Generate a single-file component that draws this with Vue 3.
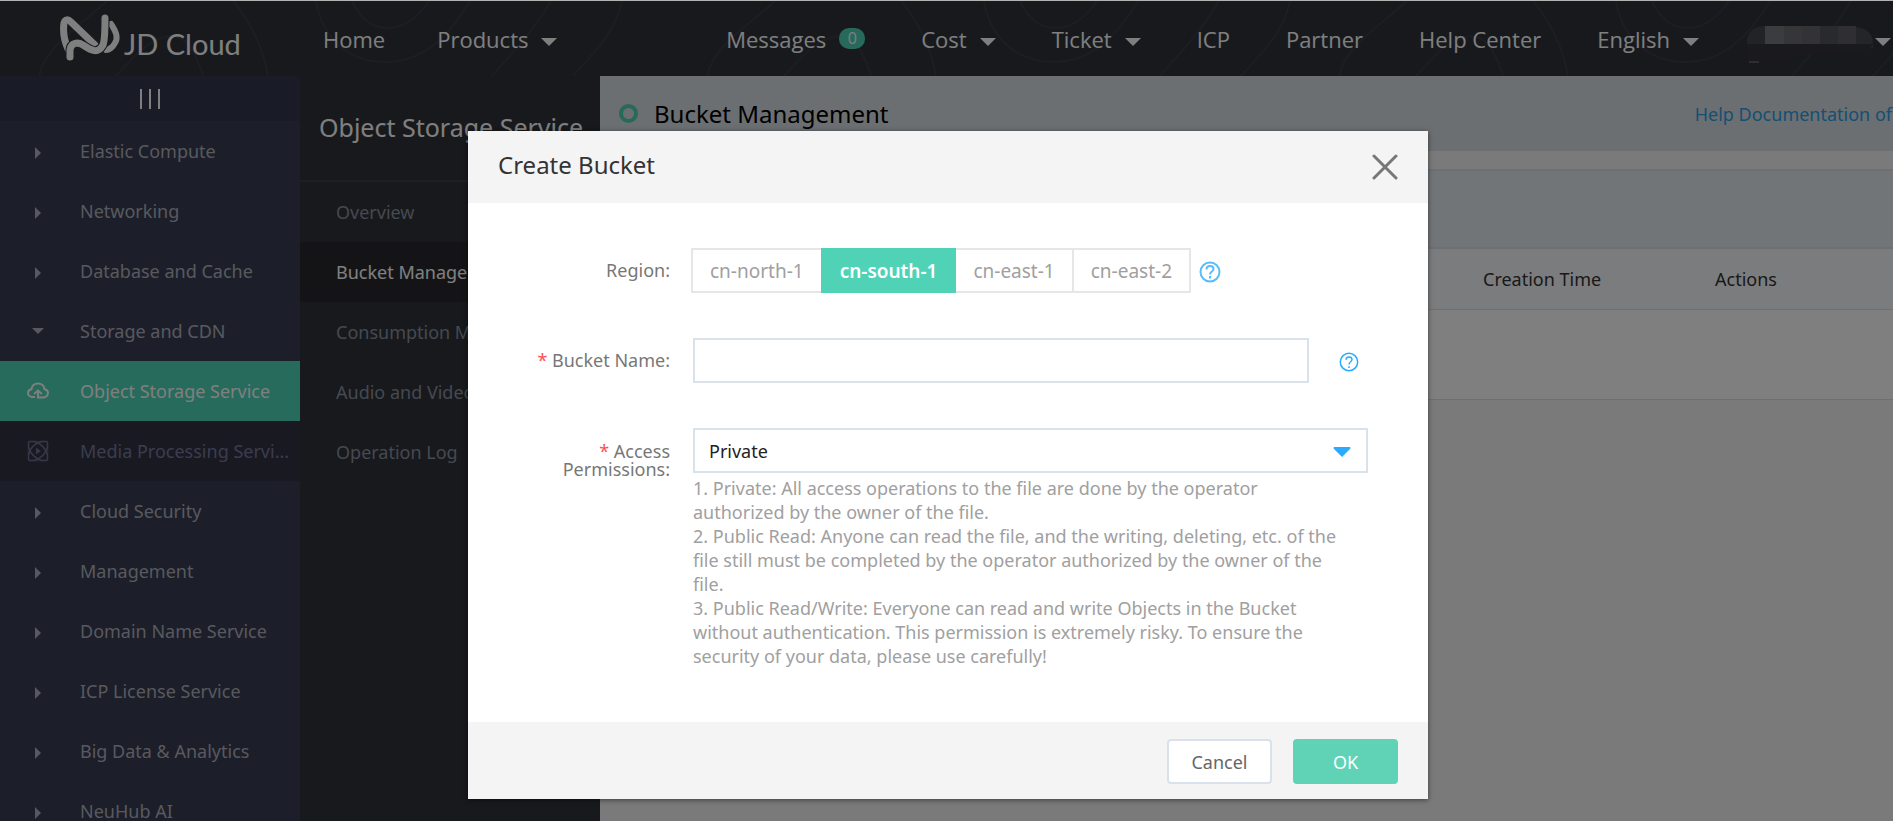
<script setup>
import { ref } from 'vue'

const navItems = [
  { label: 'Messages', badge: '0' },
  { label: 'Cost', caret: true },
  { label: 'Ticket', caret: true },
  { label: 'ICP' },
  { label: 'Partner' },
  { label: 'Help Center' },
  { label: 'English', caret: true }
]

const services = [
  { label: 'Elastic Compute', kind: 'closed' },
  { label: 'Networking', kind: 'closed' },
  { label: 'Database and Cache', kind: 'closed' },
  { label: 'Storage and CDN', kind: 'open' },
  { label: 'Object Storage Service', kind: 'cloud' },
  { label: 'Media Processing Servi...', kind: 'media' },
  { label: 'Cloud Security', kind: 'closed' },
  { label: 'Management', kind: 'closed' },
  { label: 'Domain Name Service', kind: 'closed' },
  { label: 'ICP License Service', kind: 'closed' },
  { label: 'Big Data & Analytics', kind: 'closed' },
  { label: 'NeuHub AI', kind: 'closed' }
]

const submenu = ['Overview', 'Bucket Management', 'Consumption Monitor', 'Audio and Video', 'Operation Log']
const regions = ['cn-north-1', 'cn-south-1', 'cn-east-1', 'cn-east-2']
const region = ref('cn-south-1')
const bucketName = ref('')
const permission = ref('Private')
</script>

<template>
  <div class="page">
    <header class="topbar">
      <svg class="contours" viewBox="0 0 1893 76" preserveAspectRatio="xMinYMin slice" aria-hidden="true">
        <defs>
          <g id="contour-set" fill="none" stroke="#393c45" stroke-width="2">
            <path d="M107 0C80 25 44 46 39 76" />
            <path d="M115 76C135 55 150 36 172 35C190 36 196 56 204 76" />
            <path d="M233 0C250 20 264 48 268 76" />
            <path d="M316 0C322 36 348 61 385 61C424 61 450 34 470 0" />
            <path d="M352 0C360 18 372 27 388 27C404 27 418 16 429 0" />
            <path d="M491 76C516 48 536 26 551 0" />
            <path d="M572 76C596 50 616 30 622 0" />
          </g>
        </defs>
        <use href="#contour-set" />
        <use href="#contour-set" x="668" />
        <use href="#contour-set" x="1300" />
      </svg>
      <a class="logo" href="#" aria-label="JD Cloud">
        <svg viewBox="0 0 188 52" width="188" height="52" fill="none" stroke="#fff" stroke-linecap="round" stroke-linejoin="round">
          <path d="M9 36C5 27 4 17 5 10C6 6 9 6 12 9L36 32" stroke-width="7" />
          <path d="M52 11C58 20 59 25 56 30C54 34 50 37 47 37" stroke-width="6" />
          <path d="M11 44V37C12 29 19 29 24 32C33 38 39 41 44 32C46 27 46 18 46 5" stroke="#2f323b" stroke-width="9" />
          <path d="M11 44V37C12 29 19 29 24 32C33 38 39 41 44 32C46 27 46 18 46 5" stroke-width="7" />
          <text x="65" y="42" fill="#fff" stroke="none" font-family="Lato, sans-serif" font-size="29">JD Cloud</text>
        </svg>
      </a>
      <nav class="nav-left">
        <a href="#">Home</a>
        <a href="#">Products<i class="caret"></i></a>
      </nav>
      <nav class="nav-right">
        <a v-for="n in navItems" :key="n.label" href="#">
          {{ n.label }}<span v-if="n.badge" class="badge">{{ n.badge }}</span><i v-if="n.caret" class="caret"></i>
        </a>
        <button class="account" type="button" aria-label="Account">
          <svg width="128" height="42" viewBox="0 0 128 42" aria-hidden="true">
            <path d="M0 22V13Q3 0 18 0V22Z" fill="#42464e" />
            <path d="M18 0H37V22H18Z" fill="#77787c" />
            <path d="M37 0H55V22H37Z" fill="#6c6d72" />
            <path d="M55 0H73V22H55Z" fill="#66666c" />
            <path d="M73 0H91V22H73Z" fill="#53545b" />
            <path d="M91 0H109V22H91Z" fill="#5f5f67" />
            <path d="M109 1Q126 3 126 18V22H109Z" fill="#484a51" />
            <path d="M0 18H126Q122 29 99 26Q84 30 63 28Q38 35 14 36H0Z" fill="#34353c" />
            <path d="M2 36H12" stroke="#83858a" stroke-width="1" />
          </svg>
          <i class="caret"></i>
        </button>
      </nav>
    </header>

    <div class="body">
      <aside class="services">
        <svg class="waves" viewBox="0 0 300 745" preserveAspectRatio="none" aria-hidden="true">
          <path d="M60 160L200 60L300 130V330L180 280Z" fill="#3a4656" opacity=".25" />
          <path d="M0 400Q150 350 300 420L0 510Z" fill="#3a4656" opacity=".3" />
          <path d="M110 745L160 690Q230 660 300 640V745Z" fill="#3a4656" opacity=".3" />
        </svg>
        <button class="collapse" type="button" aria-label="Collapse menu"><i></i><i></i><i></i></button>
        <a v-for="s in services" :key="s.label" href="#" class="service" :class="s.kind">
          <span class="mark">
            <svg v-if="s.kind === 'cloud'" width="22" height="18" viewBox="0 0 22 18" fill="none" stroke="#fff" stroke-width="2">
              <path d="M8 15H5.500C3 15 1 13.200 1 11C1 9 2.500 7.500 4.500 7.200C4.800 3.800 7.500 1.500 11 1.500C14.500 1.500 17.200 3.800 17.500 7.200C19.500 7.500 21 9 21 11C21 13.200 19 15.500 16.500 15.500H11V9" />
              <path d="M7 12L11 8.500L15 12" />
            </svg>
            <svg v-else-if="s.kind === 'media'" width="22" height="22" viewBox="0 0 22 22" fill="none" stroke="#6c7090" stroke-width="1.500">
              <path d="M1.500 7V3Q1.500 1.500 3 1.500H7Q17 4 20.500 15V19Q20.500 20.500 19 20.500H15Q4 17 1.500 7Z" />
              <path d="M20.500 7V3Q20.500 1.500 19 1.500H15Q4 4 1.500 15V19Q1.500 20.500 3 20.500H7Q18 17 20.500 7Z" />
              <path d="M7 1.500H15M7 20.500H15M1.500 7V15M20.500 7V15" opacity=".5" />
              <path d="M9 7.500L14 11L9 14.500Z" fill="#6c7090" stroke="none" />
            </svg>
            <i v-else :class="s.kind === 'open' ? 'tri-down' : 'tri-right'"></i>
          </span>
          <span class="service-label">{{ s.label }}</span>
        </a>
      </aside>

      <aside class="submenu">
        <h2>Object Storage Service</h2>
        <a v-for="(m, i) in submenu" :key="m" href="#" :class="{ active: i === 1 }">{{ m }}</a>
      </aside>

      <main class="content">
        <div class="heading">
          <h1><i class="ring"></i>Bucket Management</h1>
          <a href="#">Help Documentation of</a>
        </div>
        <div class="tools"></div>
        <table>
          <colgroup>
            <col class="col-lead" />
            <col class="col-time" />
            <col />
          </colgroup>
          <thead>
            <tr><td></td><th scope="col">Creation Time</th><th scope="col">Actions</th></tr>
          </thead>
          <tbody>
            <tr><td colspan="3"></td></tr>
          </tbody>
        </table>
      </main>
    </div>

    <div class="overlay">
      <form class="dialog" role="dialog" aria-labelledby="dialog-title" @submit.prevent>
        <header class="dialog-head">
          <h2 id="dialog-title">Create Bucket</h2>
          <button type="button" class="close" aria-label="Close">
            <svg width="26" height="26" viewBox="0 0 26 26" stroke="#777" stroke-width="3" stroke-linecap="round">
              <path d="M2 2L24 24M24 2L2 24" />
            </svg>
          </button>
        </header>

        <div class="dialog-body">
          <div class="row">
            <span class="label" id="region-label">Region:</span>
            <div class="field">
              <div class="segments" role="group" aria-labelledby="region-label">
                <button v-for="r in regions" :key="r" type="button" :class="{ on: r === region }" @click="region = r">{{ r }}</button>
              </div>
              <button type="button" class="help" aria-label="Region help">
                <svg width="22" height="22" viewBox="0 0 22 22" fill="none" stroke="#5bbcfb" stroke-width="2">
                  <circle cx="11" cy="11" r="9.500" />
                  <path d="M7.500 8.500C7.500 6.300 9 5 11 5S14.500 6.300 14.500 8.200C14.500 10.500 11 10.700 11 13.500M11 15V17.500" />
                </svg>
              </button>
            </div>
          </div>

          <div class="row">
            <label class="label" for="bucket-name"><b>*</b> Bucket Name:</label>
            <div class="field wide">
              <input id="bucket-name" v-model="bucketName" type="text" />
              <button type="button" class="help" aria-label="Bucket name help">
                <svg width="20" height="20" viewBox="0 0 20 20" fill="none" stroke="#2aabfd" stroke-width="1.500">
                  <circle cx="10" cy="10" r="8.700" />
                  <path d="M7 7.800C7 6 8.300 5 10 5S13 6 13 7.600C13 9.700 10 9.800 10 12.500M10 14.200V16" />
                </svg>
              </button>
            </div>
          </div>

          <div class="row">
            <label class="label two-line" for="permission"><b>*</b> Access Permissions:</label>
            <div class="field wide stacked">
              <div class="select">
                <select id="permission" v-model="permission">
                  <option>Private</option>
                  <option>Public Read</option>
                  <option>Public Read/Write</option>
                </select>
                <svg class="select-arrow" width="18" height="10" viewBox="0 0 18 10" aria-hidden="true"><path d="M1 0H17Q18 1 17 2L9 10L1 2Q0 1 1 0Z" fill="#2aabfd" /></svg>
              </div>
              <p>
                1. Private: All access operations to the file are done by the operator<br />
                authorized by the owner of the file.<br />
                2. Public Read: Anyone can read the file, and the writing, deleting, etc. of the<br />
                file still must be completed by the operator authorized by the owner of the<br />
                file.<br />
                3. Public Read/Write: Everyone can read and write Objects in the Bucket<br />
                without authentication. This permission is extremely risky. To ensure the<br />
                security of your data, please use carefully!
              </p>
            </div>
          </div>
        </div>

        <footer class="dialog-foot">
          <button type="button" class="cancel">Cancel</button>
          <button type="submit" class="ok">OK</button>
        </footer>
      </form>
    </div>
  </div>
</template>

<style>
body {
  margin: 0;
  overflow: hidden;
}
</style>

<style scoped>
.page,
.page * {
  box-sizing: border-box;
}
.page {
  height: 100vh;
  overflow: hidden;
  display: flex;
  flex-direction: column;
  border-top: 1px solid #b3b3b3;
  font-family: "Noto Sans", "Open Sans", sans-serif;
  font-size: 18px;
  color: #333;
  position: relative;
}
a {
  color: inherit;
  text-decoration: none;
}
button,
input,
select {
  font: inherit;
  margin: 0;
  padding: 0;
}
h1,
h2,
p {
  margin: 0;
  font-weight: 400;
}
.topbar {
  flex: none;
  height: 75px;
  background: #2f323b;
  color: #fff;
  display: flex;
  align-items: center;
  font-family: "Open Sans", "Noto Sans", sans-serif;
  font-size: 22px;
  position: relative;
}
.contours {
  position: absolute;
  inset: 0;
  width: 100%;
  height: 100%;
}
.logo {
  margin-left: 59px;
  width: 264px;
  display: flex;
  position: relative;
}
.nav-left,
.nav-right {
  display: flex;
  align-items: center;
  white-space: nowrap;
  position: relative;
}
.nav-left {
  gap: 52px;
}
.nav-right {
  margin-left: auto;
  gap: 56px;
  padding-right: 2px;
}
.nav-left a,
.nav-right a {
  display: flex;
  align-items: center;
}
.caret {
  width: 0;
  height: 0;
  margin: 6px 0 0 13px;
  border: 8px solid transparent;
  border-top-color: #fff;
  border-bottom: 0;
}
.badge {
  margin-left: 13px;
  width: 26px;
  height: 21px;
  border-radius: 10px;
  background: #4fd2b6;
  font-size: 16px;
  line-height: 21px;
  text-align: center;
}
.account {
  margin-left: -8px;
  display: flex;
  align-items: center;
  background: none;
  border: 0;
}
.account svg {
  margin-top: 16px;
}
.account .caret {
  margin-left: 0;
}
.body {
  flex: 1;
  min-height: 0;
  display: flex;
}
.services {
  flex: none;
  width: 300px;
  background: #393c52;
  color: #b0b2bd;
  position: relative;
  overflow: hidden;
}
.waves {
  position: absolute;
  inset: 0;
  width: 100%;
  height: 100%;
}
.collapse {
  width: 100%;
  height: 45px;
  border: 0;
  background: #33364e;
  display: flex;
  justify-content: center;
  align-items: center;
  gap: 7px;
  position: relative;
}
.collapse i {
  width: 2px;
  height: 20px;
  background: #fff;
}
.service {
  height: 60px;
  display: flex;
  align-items: center;
  position: relative;
}
.mark {
  flex: none;
  width: 76px;
  display: flex;
  justify-content: center;
}
.service-label {
  margin-left: 4px;
  white-space: nowrap;
}
.tri-right {
  margin-top: 4px;
  border: 6px solid transparent;
  border-left-color: #b0b2bd;
  border-right: 0;
}
.tri-down {
  border: 6px solid transparent;
  border-top-color: #b0b2bd;
  border-bottom: 0;
}
.cloud {
  background: #4ed6b8;
  color: #fff;
}
.media {
  background: #333344;
  color: #757a9c;
}
.submenu {
  flex: none;
  width: 300px;
  background: #303238;
  color: #8a92a2;
}
.submenu h2 {
  height: 106px;
  padding-left: 19px;
  border-bottom: 2px solid #3d3f47;
  font-size: 25px;
  line-height: 102px;
  color: #fff;
  white-space: nowrap;
}
.submenu a {
  display: block;
  padding-left: 36px;
  line-height: 60px;
  white-space: nowrap;
}
.submenu .active {
  background: #28292f;
  color: #fff;
}
.content {
  flex: 1;
  min-width: 0;
  background: #f4f4f4;
}
.heading {
  height: 75px;
  padding: 0 1px 0 19px;
  background: #d7dee3;
  display: flex;
  align-items: center;
  justify-content: space-between;
}
.heading h1 {
  display: flex;
  align-items: center;
  font-size: 24px;
  color: #000;
}
.ring {
  width: 19px;
  height: 19px;
  margin-right: 16px;
  border: 4px solid #4fd2b6;
  border-radius: 50%;
}
.heading a {
  color: #2b9fe6;
}
.tools {
  margin-top: 18px;
  height: 80px;
  background: #e4ebf0;
  border: 2px solid #dcdfe8;
  border-width: 2px 0;
}
table {
  width: 100%;
  border-collapse: collapse;
  table-layout: fixed;
}
.col-lead {
  width: 883px;
}
.col-time {
  width: 232px;
}
th {
  padding: 0;
  font-weight: 400;
  text-align: left;
}
thead tr {
  height: 60px;
  background: #f7f8fc;
  border-bottom: 1px solid #dcdfe8;
}
tbody tr {
  height: 90px;
  background: #fff;
  border-bottom: 1px solid #dcdfe8;
}
.overlay {
  position: absolute;
  inset: 0;
  padding: 130px 0 0 3px;
  background: rgba(0, 0, 0, 0.5);
  display: flex;
  justify-content: center;
  align-items: flex-start;
}
.dialog {
  width: 960px;
  background: #fff;
  box-shadow: 0 1px 5px rgba(0, 0, 0, 0.5);
}
.dialog-head {
  height: 72px;
  padding: 0 30px;
  background: #f4f4f4;
  display: flex;
  align-items: center;
  justify-content: space-between;
}
.dialog-head h2 {
  font-size: 24px;
  line-height: 68px;
  height: 72px;
}
.close,
.help {
  display: flex;
  border: 0;
  background: none;
}
.dialog-body {
  padding: 45px 60px 54px 0;
}
.row {
  display: grid;
  grid-template-columns: 202px 1fr;
  column-gap: 21px;
  margin-bottom: 45px;
}
.row:last-child {
  margin-bottom: 0;
}
.label {
  color: #777;
  text-align: right;
  line-height: 45px;
}
.label b {
  color: #ff4f4f;
  font-weight: 400;
}
.two-line {
  padding: 14px 0 0 60px;
  line-height: 18px;
}
.field {
  display: flex;
  align-items: center;
}
.wide {
  margin-left: 2px;
}
.segments {
  display: flex;
}
.segments button {
  height: 45px;
  padding: 0 17px;
  border: 2px solid #e6e6e6;
  background: #fff;
  color: #a0a0a0;
  font-size: 19px;
}
.segments button + button {
  margin-left: -2px;
}
.segments .on {
  background: #50d2b7;
  border-color: #50d2b7;
  color: #fff;
  font-weight: 600;
  position: relative;
}
.help {
  padding-top: 2px;
}
.segments + .help {
  margin-left: 8px;
}
input,
select {
  height: 45px;
  border: 2px solid #d9e2ea;
  border-radius: 0;
  background: #fff;
  color: #222;
  outline: 0;
}
input {
  flex: 1;
  padding: 0 14px;
}
input + .help {
  width: 59px;
  justify-content: flex-end;
  padding-right: 9px;
}
.stacked {
  display: block;
}
.select {
  position: relative;
}
select {
  display: block;
  width: 100%;
  padding: 0 14px;
  appearance: none;
}
.select-arrow {
  position: absolute;
  right: 17px;
  top: 19px;
  pointer-events: none;
}
p {
  margin-top: 3px;
  line-height: 24px;
  color: #a0a0a0;
  white-space: nowrap;
}
.dialog-foot {
  height: 77px;
  padding: 2px 30px 0;
  background: #f4f4f4;
  display: flex;
  align-items: center;
  justify-content: flex-end;
  gap: 21px;
}
.dialog-foot button {
  width: 105px;
  height: 45px;
  border: 2px solid #d9e2ea;
  border-radius: 4px;
  background: #fff;
  color: #666;
}
.dialog-foot .ok {
  background: #60d3b6;
  border-color: #60d3b6;
  color: #fff;
}
</style>
